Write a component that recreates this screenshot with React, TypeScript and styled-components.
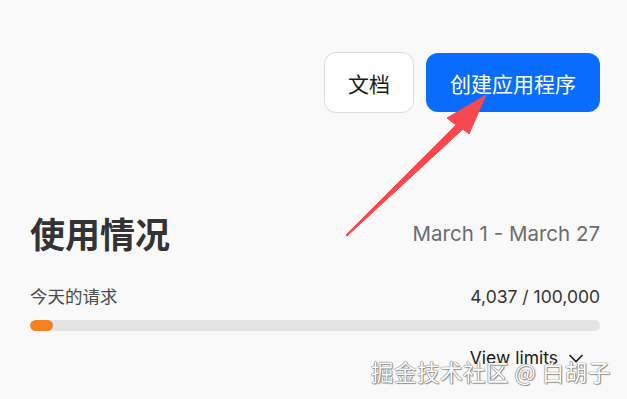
import React from "react";
import styled, { createGlobalStyle } from "styled-components";

const GlobalStyle = createGlobalStyle`
    html, body {
        margin: 0;
        padding: 0;
        background: #f9f9f9;
        font-family: Inter, "Noto Sans CJK SC", sans-serif;
    }
`;

const Page = styled.div`
    position: relative;
    width: 627px;
    height: 399px;
    overflow: hidden;
    padding: 52px 27px 0 30px;
    box-sizing: border-box;
    background: #f9f9f9;
`;

const Toolbar = styled.div`
    display: flex;
    justify-content: flex-end;
    align-items: center;
    gap: 12px;
`;

const Button = styled.button<{ $primary?: boolean }>`
    height: ${(p) => (p.$primary ? "59px" : "61px")};
    padding: 0 ${(p) => (p.$primary ? "24px" : "23px")};
    border-radius: 12px;
    font-family: Inter, "Noto Sans CJK SC", sans-serif;
    font-size: 21px;
    cursor: pointer;
    border: ${(p) => (p.$primary ? "none" : "1px solid #dcdcdc")};
    background: ${(p) => (p.$primary ? "#0a6cff" : "#ffffff")};
    color: ${(p) => (p.$primary ? "#ffffff" : "#1a1a1a")};
`;

const Usage = styled.section`
    margin-top: 100px;
`;

const HeaderRow = styled.div`
    display: flex;
    justify-content: space-between;
    align-items: center;
`;

const Title = styled.h1`
    margin: 0;
    font-size: 35px;
    font-weight: 700;
    color: #333;
    line-height: 44px;
`;

const DateRange = styled.span`
    font-size: 20.5px;
    color: #6c6c6c;
    margin-top: -4px;
`;

const StatRow = styled.div`
    display: flex;
    justify-content: space-between;
    align-items: baseline;
    margin-top: 26px;
`;

const StatLabel = styled.span`
    font-size: 17.5px;
    color: #4a4a4a;
`;

const StatValue = styled.span`
    font-size: 17.5px;
    color: #333;
`;

const Track = styled.div`
    margin-top: 12px;
    height: 11px;
    border-radius: 6px;
    background: #e4e4e4;
    overflow: hidden;
`;

const Fill = styled.div`
    height: 100%;
    border-radius: 6px;
    background: #f5821f;
`;

const Footer = styled.div`
    display: flex;
    justify-content: flex-end;
    margin-top: 16px;
    padding-right: 15px;
`;

const Toggle = styled.button`
    display: flex;
    align-items: center;
    gap: 9px;
    border: none;
    background: none;
    padding: 0;
    font-family: Inter, sans-serif;
    font-size: 17.5px;
    color: #1a1a1a;
    cursor: pointer;
`;

const Arrow = styled.svg`
    position: absolute;
    left: 0;
    top: 0;
    pointer-events: none;
`;

const Watermark = styled.div`
    position: absolute;
    left: 371px;
    top: 355px;
    font-family: "Noto Sans CJK SC", sans-serif;
    font-size: 22.5px;
    color: #ffffff;
    letter-spacing: 0.5px;
    text-shadow: 0 0 1px #555, 0 0 1px #555, 1px 1px 1px rgba(0, 0, 0, 0.35);
`;

const used = 4037;
const limit = 100000;

const App: React.FC = () => {
    const pct = Math.max((used / limit) * 100, 4);

    return (
        <Page>
            <GlobalStyle />
            <Toolbar>
                <Button>文档</Button>
                <Button $primary>创建应用程序</Button>
            </Toolbar>

            <Usage>
                <HeaderRow>
                    <Title>使用情况</Title>
                    <DateRange>March 1 - March 27</DateRange>
                </HeaderRow>
                <StatRow>
                    <StatLabel>今天的请求</StatLabel>
                    <StatValue>4,037 / 100,000</StatValue>
                </StatRow>
                <Track>
                    <Fill style={{ width: `${pct}%` }} />
                </Track>
                <Footer>
                    <Toggle>
                        View limits
                        <svg width="18" height="18" viewBox="0 0 18 18" fill="none" stroke="#1a1a1a" strokeWidth="1.6">
                            <path d="M2.5 6 L9 12.5 L15.5 6" />
                        </svg>
                    </Toggle>
                </Footer>
            </Usage>

            <Arrow width="627" height="399" viewBox="0 0 627 399">
                <polygon
                    points="346,235 456,125 447,118 486,95 469,134 463,129 347,236"
                    fill="#f5484f"
                    stroke="#f5484f"
                    strokeWidth="1"
                    strokeLinejoin="round"
                />
            </Arrow>

            <Watermark>掘金技术社区 @ 白胡子</Watermark>
        </Page>
    );
};

export default App;
